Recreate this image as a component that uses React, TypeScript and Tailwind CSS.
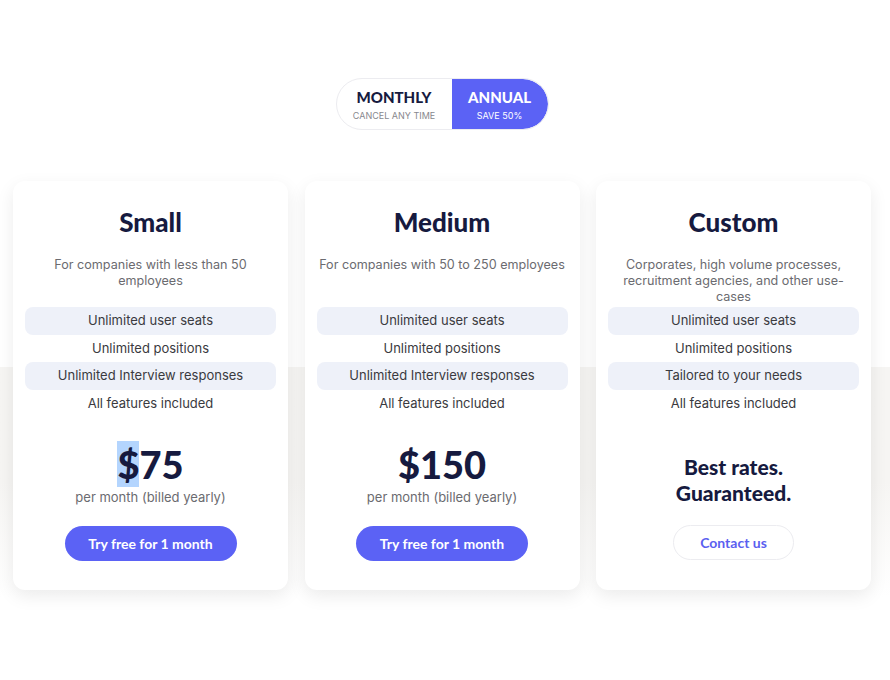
import React from "react";

const HEAD = "font-['Lato','Inter',sans-serif]";
const BODY = "font-['Inter','Noto_Sans',sans-serif]";

type Plan = {
  name: string;
  desc: string;
  features: string[];
  price?: string;
  cta: string;
};

const PLANS: Plan[] = [
  {
    name: "Small",
    desc: "For companies with less than 50 employees",
    features: ["Unlimited user seats", "Unlimited positions", "Unlimited Interview responses", "All features included"],
    price: "$75",
    cta: "Try free for 1 month",
  },
  {
    name: "Medium",
    desc: "For companies with 50 to 250 employees",
    features: ["Unlimited user seats", "Unlimited positions", "Unlimited Interview responses", "All features included"],
    price: "$150",
    cta: "Try free for 1 month",
  },
  {
    name: "Custom",
    desc: "Corporates, high volume processes, recruitment agencies, and other use-cases",
    features: ["Unlimited user seats", "Unlimited positions", "Tailored to your needs", "All features included"],
    cta: "Contact us",
  },
];

const Card: React.FC<{ plan: Plan; selectDollar?: boolean }> = ({ plan, selectDollar }) => (
  <div className="w-[275px] h-[409px] bg-white rounded-xl shadow-[0_6px_18px_rgba(0,0,0,0.08)] flex flex-col items-center px-3 pt-[24px]">
    <h2 className={`${HEAD} text-[26px] font-black text-[#161a3f] leading-[34px]`}>{plan.name}</h2>
    <p className={`${BODY} mt-[18px] h-[50px] w-[251px] text-[12.6px] leading-[16px] text-[#6b6b70] text-center`}>{plan.desc}</p>
    <ul className={`${BODY} w-full text-[13px] text-[#3a3a40] text-center`}>
      {plan.features.map((f, i) => (
        <li
          key={f}
          className={`h-[27.5px] flex items-center justify-center rounded-lg ${i % 2 === 0 ? "bg-[#eef1f9]" : ""}`}
        >
          {f}
        </li>
      ))}
    </ul>
    {plan.price ? (
      <div className="mt-[24px] flex flex-col items-center">
        <div className={`${HEAD} text-[38px] font-black text-[#161a3f] leading-[46px]`}>
          {selectDollar ? (
            <>
              <span className="bg-[#b4d5fe]">$</span>
              {plan.price.slice(1)}
            </>
          ) : (
            plan.price
          )}
        </div>
        <div className={`${BODY} mt-[2px] text-[13px] text-[#6b6b70] leading-[16px]`}>per month (billed yearly)</div>
        <button className={`${HEAD} mt-[21px] h-[35px] w-[172px] rounded-full bg-[#5b62f5] text-white text-[14px] font-bold`}>
          {plan.cta}
        </button>
      </div>
    ) : (
      <div className="mt-[37px] flex flex-col items-center">
        <div className={`${HEAD} text-[21px] font-black text-[#161a3f] leading-[26px] text-center`}>
          Best rates.
          <br />
          Guaranteed.
        </div>
        <button className={`${HEAD} mt-[19px] h-[35px] w-[121px] rounded-full bg-white border border-[#ececf0] text-[#5b5ff0] text-[14px] font-bold`}>
          {plan.cta}
        </button>
      </div>
    )}
  </div>
);

export default function App() {
  return (
    <div className="relative w-[890px] h-[680px] bg-white overflow-hidden">
      <div className="absolute left-0 right-0 top-[367px] h-[230px] bg-gradient-to-b from-[#f6f5f3] via-[#f6f5f3] to-white" />
      <div className="relative flex flex-col">
        <div className="flex justify-center pt-[78px] pr-[6px]">
          <div className="flex h-[52px] rounded-full border border-[#ececf0] bg-white overflow-hidden">
            <div className="w-[115px] flex flex-col items-center justify-center pt-[2px]">
              <span className={`${HEAD} text-[15px] font-black text-[#161a3f] leading-[18px]`}>MONTHLY</span>
              <span className={`${BODY} text-[9px] text-[#88888e] leading-[12px] mt-[4px]`}>CANCEL ANY TIME</span>
            </div>
            <div className="w-[96px] bg-[#5b62f5] rounded-r-full flex flex-col items-center justify-center pt-[2px]">
              <span className={`${HEAD} text-[15px] font-black text-white leading-[18px]`}>ANNUAL</span>
              <span className={`${BODY} text-[9px] text-white leading-[12px] mt-[4px]`}>SAVE 50%</span>
            </div>
          </div>
        </div>
        <div className="flex gap-[16.5px] pl-[13px] mt-[51px]">
          {PLANS.map((p, i) => (
            <Card key={p.name} plan={p} selectDollar={i === 0} />
          ))}
        </div>
      </div>
    </div>
  );
}
